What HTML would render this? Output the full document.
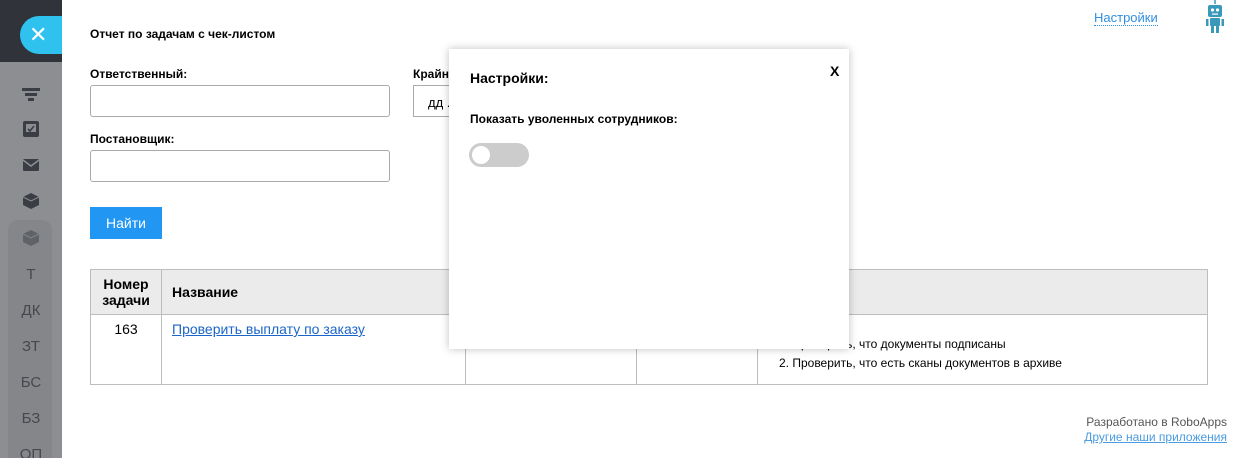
<!DOCTYPE html>
<html><head><meta charset="utf-8"><style>
*{box-sizing:border-box;margin:0;padding:0}
html,body{width:1234px;height:458px;overflow:hidden}
body{background:#fff;font-family:"Liberation Sans",Arial,sans-serif;color:#000;position:relative;font-size:12px}
.side{position:absolute;left:0;top:0;width:62px;height:458px;background:#8c8e91;overflow:hidden}
.sidetop{position:absolute;left:0;top:0;width:62px;height:62px;background:#30333a;overflow:hidden}
.xbtn{position:absolute;left:20px;top:16px;width:60px;height:38px;border-radius:19px;background:#2fc2ef;color:#fff;font-size:22px;line-height:38px;padding-left:9px}
.hl{position:absolute;left:8px;top:220px;width:44px;height:260px;border-radius:10px;background:#848689}
.lab{position:absolute;left:0;width:62px;text-align:center;color:#45484d;font-size:15px}
.ic{position:absolute}
.abs{position:absolute}
.lbl{position:absolute;font-weight:bold;font-size:12px}
.inp{position:absolute;border:1px solid #aaa;border-radius:3px;background:#fff}
table{position:absolute;left:90px;top:269px;width:1118px;border-collapse:collapse}
td,th{border:1px solid #bdbdbd;vertical-align:top}
th{background:#ebebeb;height:45px;vertical-align:middle;text-align:left;font-size:14px;padding:0 10px}
td{height:70px;font-size:14px}
a{color:#1a66c8}
.modal{position:absolute;left:449px;top:49px;width:400px;height:300px;background:#fff;box-shadow:0 0 8px rgba(0,0,0,.25)}
</style></head><body>
<div class="side">
<div class="hl"></div>
<svg class="ic" style="left:22px;top:88px" width="18" height="14"><rect x="0" y="0" width="18" height="3" fill="#3a3d44"/><rect x="3" y="5" width="12" height="3" fill="#3a3d44"/><rect x="6" y="10" width="6" height="3" fill="#3a3d44"/></svg>
<svg class="ic" style="left:23px;top:121px" width="16" height="16"><rect x="0" y="0" width="16" height="16" rx="2" fill="#3a3d44"/><rect x="3" y="3" width="10" height="8" fill="#8c8e91"/><path d="M5 8l2 2 4-5" stroke="#3a3d44" stroke-width="1.6" fill="none"/></svg>
<svg class="ic" style="left:23px;top:159px" width="16" height="12"><rect width="16" height="12" rx="1" fill="#3a3d44"/><path d="M0 1l8 6 8-6" stroke="#8c8e91" stroke-width="1.5" fill="none"/></svg>
<svg class="ic" style="left:23px;top:193px" width="16" height="16"><path d="M8 0l8 4v8l-8 4-8-4V4z" fill="#3a3d44"/><path d="M0 4l8 4 8-4" stroke="#8c8e91" stroke-width="1" fill="none"/></svg>
<svg class="ic" style="left:23px;top:230px" width="16" height="16"><path d="M8 0l8 4v8l-8 4-8-4V4z" fill="#5f6267"/><path d="M0 4l8 4 8-4" stroke="#848689" stroke-width="1" fill="none"/></svg>
<div class="lab" style="top:266px">Т</div>
<div class="lab" style="top:302px">ДК</div>
<div class="lab" style="top:338px">ЗТ</div>
<div class="lab" style="top:374px">БС</div>
<div class="lab" style="top:410px">БЗ</div>
<div class="lab" style="top:446px">ОП</div>
</div>
<div class="sidetop"><div class="xbtn">✕</div></div>

<div class="lbl" style="left:90px;top:27px">Отчет по задачам с чек-листом</div>
<div class="lbl" style="left:90px;top:67px">Ответственный:</div>
<div class="inp" style="left:90px;top:85px;width:300px;height:32px"></div>
<div class="lbl" style="left:413px;top:67px">Крайний срок</div>
<div class="inp" style="left:413px;top:85px;width:200px;height:32px;border-radius:0;padding:9px 14px;font-size:13px">дд . мм . гггг</div>
<div class="lbl" style="left:90px;top:132px">Постановщик:</div>
<div class="inp" style="left:90px;top:150px;width:300px;height:32px"></div>
<div class="abs" style="left:90px;top:207px;width:72px;height:32px;background:#2196f3;color:#fff;font-size:14px;line-height:32px;text-align:center">Найти</div>

<table>
<tr><th style="width:71px;text-align:center;padding:0">Номер<br>задачи</th><th style="width:304px">Название</th><th style="width:171px"></th><th style="width:121px"></th><th></th></tr>
<tr><td style="text-align:center;padding-top:6px">163</td><td style="padding:6px 10px"><a href="#">Проверить выплату по заказу</a></td><td></td><td></td>
<td style="font-size:12px;padding:20px 0 0 21px;line-height:19px">1. Проверить, что документы подписаны<br>2. Проверить, что есть сканы документов в архиве</td></tr>
</table>

<div class="abs" style="left:1094px;top:10px;font-size:13px;color:#2f8fe0;border-bottom:1px dotted #2f8fe0;line-height:15px">Настройки</div>
<svg class="abs" style="left:1206px;top:0" width="18" height="34"><path d="M9 0v4" stroke="#3a98bb" stroke-width="1.5"/><rect x="2" y="5" width="14" height="12" rx="2" fill="#3a98bb"/><circle cx="6.5" cy="10" r="1.6" fill="#fff"/><circle cx="11.5" cy="10" r="1.6" fill="#fff"/><rect x="6" y="13.5" width="6" height="1.2" fill="#fff"/><rect x="4" y="18" width="10" height="8" rx="1" fill="#3a98bb"/><rect x="0" y="19" width="2.5" height="7" fill="#3a98bb"/><rect x="15.5" y="19" width="2.5" height="7" fill="#3a98bb"/><rect x="5" y="26" width="3" height="7" fill="#3a98bb"/><rect x="10" y="26" width="3" height="7" fill="#3a98bb"/></svg>

<div class="abs" style="left:1000px;top:415px;width:227px;text-align:right;font-size:12px;color:#555">Разработано в RoboApps</div>
<div class="abs" style="left:1000px;top:430px;width:227px;text-align:right;font-size:12px"><a href="#" style="color:#4a9be0">Другие наши приложения</a></div>

<div class="modal">
<div class="abs" style="left:21px;top:21px;font-size:14px;font-weight:bold">Настройки:</div>
<div class="abs" style="left:381px;top:14px;font-size:14px;font-weight:bold">X</div>
<div class="abs" style="left:21px;top:63px;font-size:12px;font-weight:bold">Показать уволенных сотрудников:</div>
<div class="abs" style="left:20px;top:94px;width:60px;height:24px;border-radius:12px;background:#ccc"></div>
<div class="abs" style="left:23px;top:97px;width:18px;height:18px;border-radius:50%;background:#fff"></div>
</div>
</body></html>
